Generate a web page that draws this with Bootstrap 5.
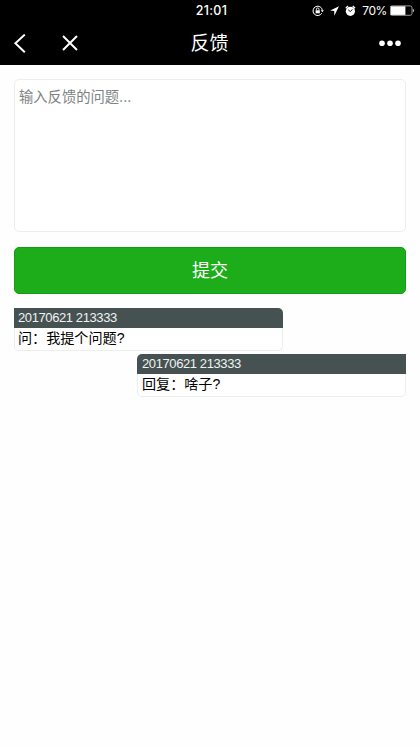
<!DOCTYPE html>
<html lang="zh-CN">
<head>
<meta charset="utf-8">
<meta name="viewport" content="width=device-width, initial-scale=1">
<title>反馈</title>
<link href="https://cdn.jsdelivr.net/npm/bootstrap@5.3.0/dist/css/bootstrap.min.css" rel="stylesheet">
<style>
body{font-family:Inter,"Noto Sans CJK SC",sans-serif;background:#fefefe;color:#000;min-height:747px}
.topbar{height:65px;background:#000}
.status{height:22px;display:grid;grid-template-columns:1fr auto 1fr;padding:0 5px 0 0;font-size:12.5px;line-height:22px}
.clock{font-weight:500;letter-spacing:.3px;padding-left:8px}
.percent{font-size:12px;letter-spacing:-.4px;margin:0 3px 0 6px}
.status-icons svg,.navline svg{display:block;flex:none}
.navline{height:43px;display:grid;grid-template-columns:1fr auto 1fr;padding:0 19px 0 13px}
.close-x{margin-left:34px}
.nav-title{font-size:19px;line-height:42px;padding-left:5px}
.page-body{padding:14px 14px 0}
.ask{height:153px;resize:none;border-color:#eceeee;border-radius:5px;padding:6px 5px 5px 4px;font-size:14.3px;line-height:21px;background:#fff}
.ask::placeholder{color:#7e8383;opacity:1}
.send{height:47px;margin-top:15px;border-radius:5px;background:#1dad1b;border:1px solid #169b18;font-size:18px;line-height:45px;padding:0;color:#fff}
.msg{width:269px;border:1px solid #eceeee;border-top:0;background:#fff}
.msg-q{height:43px;margin-top:14px;border-radius:0 5px 5px 5px}
.msg-a{height:43px;margin-top:3px;border-radius:5px 0 5px 5px}
.stamp{height:20px;margin:0 -1px;padding-left:4px;background:#465251;color:#f0f2f2;font-family:"Liberation Sans",sans-serif;font-size:13px;letter-spacing:-.4px;line-height:19px}
.msg-q .stamp{border-top-right-radius:5px}
.msg-a .stamp{border-top-left-radius:5px;padding-left:5px}
.said{padding-left:4px;font-size:14.1px;line-height:21px;font-family:"Liberation Sans","Noto Sans CJK SC",sans-serif}
.msg-q .said{padding-left:3px}
</style>
</head>
<body>
<header class="topbar text-white">
  <div class="status">
    <span></span>
    <span class="clock">21:01</span>
    <div class="status-icons d-flex align-items-center justify-content-end">
      <svg width="12" height="12" viewBox="0 0 12 12" fill="none" stroke="#fff"><path d="M9.8 8.2A4.7 4.7 0 1 1 10.4 5.4" stroke-width="1"/><path d="M8.8 5.2h3.1l-1.5 2z" fill="#fff" stroke="none"/><path d="M3.6 5.3h4.2v3H3.6z" fill="#fff" stroke="none"/><path d="M4.4 5.5V4.2a1.3 1.3 0 0 1 2.6 0v1.3" stroke-width=".9"/></svg>
      <svg class="ms-1" width="12" height="12" viewBox="0 0 12 12" fill="#fff"><path d="M11 1.2 2.2 5.4l4 .5.1 4.8z"/></svg>
      <svg class="ms-1" width="12" height="12" viewBox="0 0 12 12"><circle cx="6.4" cy="6.3" r="4.6" fill="#fff"/><path d="M1.8 3.2 4 1.1M11 3.2 8.8 1.1" stroke="#fff" stroke-width="1.4"/><path d="M4.2 4.9l2.2 1.7 2-2.3" fill="none" stroke="#000" stroke-width=".9"/></svg>
      <span class="percent">70%</span>
      <svg width="25" height="12" viewBox="0 0 25 12"><rect x=".2" y=".9" width="21.8" height="9.4" rx="1.8" fill="none" stroke="#aaa" stroke-width=".9"/><path d="M.6 1.3h14.8v8.6H.6z" fill="#fff"/><path d="M22.8 3.8q1.3.6 1.3 1.8t-1.3 1.8z" fill="#bbb"/></svg>
    </div>
  </div>
  <div class="navline align-items-center">
    <div class="d-flex align-items-center">
      <svg width="14" height="20" viewBox="0 0 14 20"><path d="M11.8 .6 2.4 9.3l9.4 8.9" fill="none" stroke="#fff" stroke-width="2"/></svg>
      <svg class="close-x" width="18" height="18" viewBox="0 0 18 18"><path d="m2 1 14 14M16 1 2 15" stroke="#fff" stroke-width="2"/></svg>
    </div>
    <span class="nav-title">反馈</span>
    <svg class="ms-auto" width="22" height="8" viewBox="0 0 22 8" fill="#fff"><circle cx="3" cy="3.2" r="2.8"/><circle cx="11" cy="3.2" r="2.8"/><circle cx="19" cy="3.2" r="2.8"/></svg>
  </div>
</header>
<main class="page-body">
  <textarea class="form-control ask" placeholder="输入反馈的问题..."></textarea>
  <button type="button" class="btn send w-100 d-block">提交</button>
  <div class="msg msg-q"><div class="stamp">20170621 213333</div><div class="said">问：我提个问题?</div></div>
  <div class="msg msg-a ms-auto"><div class="stamp">20170621 213333</div><div class="said">回复：啥子?</div></div>
</main>
<script src="https://cdn.jsdelivr.net/npm/bootstrap@5.3.0/dist/js/bootstrap.bundle.min.js"></script>
</body>
</html>
